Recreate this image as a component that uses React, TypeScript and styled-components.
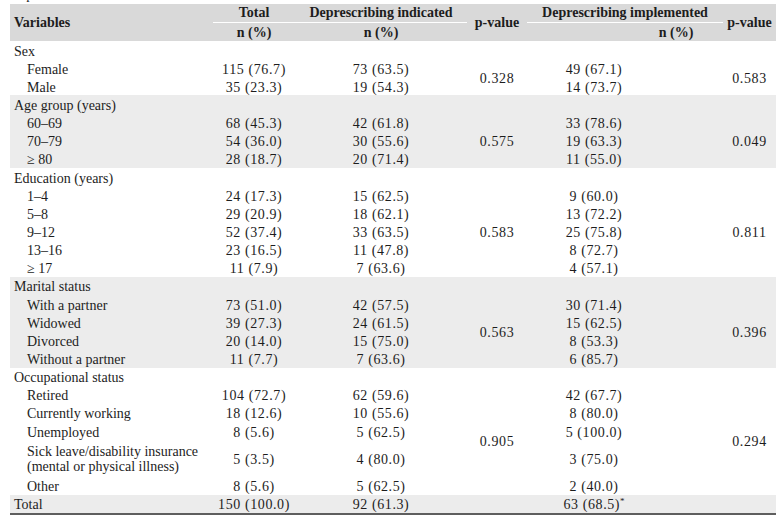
import React from 'react';
import styled, { createGlobalStyle } from 'styled-components';

const GlobalStyle = createGlobalStyle`
    html, body {
        margin: 0;
        padding: 0;
        background: #ffffff;
    }
    body {
        font-family: 'Liberation Serif', 'Times New Roman', serif;
        color: #1d1d1d;
    }
`;

const SERIF = `'Liberation Serif', 'Times New Roman', serif`;

interface Item {
    label: React.ReactNode;
    total: string;
    indicated: string;
    implemented: string;
    tall?: boolean;
}

interface Group {
    title: string;
    pIndicated: string;
    pImplemented: string;
    shaded: boolean;
    items: Item[];
}

const groups: Group[] = [
    {
        title: 'Sex',
        pIndicated: '0.328',
        pImplemented: '0.583',
        shaded: false,
        items: [
            { label: 'Female', total: '115 (76.7)', indicated: '73 (63.5)', implemented: '49 (67.1)' },
            { label: 'Male', total: '35 (23.3)', indicated: '19 (54.3)', implemented: '14 (73.7)' },
        ],
    },
    {
        title: 'Age group (years)',
        pIndicated: '0.575',
        pImplemented: '0.049',
        shaded: true,
        items: [
            { label: '60–69', total: '68 (45.3)', indicated: '42 (61.8)', implemented: '33 (78.6)' },
            { label: '70–79', total: '54 (36.0)', indicated: '30 (55.6)', implemented: '19 (63.3)' },
            { label: '≥ 80', total: '28 (18.7)', indicated: '20 (71.4)', implemented: '11 (55.0)' },
        ],
    },
    {
        title: 'Education (years)',
        pIndicated: '0.583',
        pImplemented: '0.811',
        shaded: false,
        items: [
            { label: '1–4', total: '24 (17.3)', indicated: '15 (62.5)', implemented: '9 (60.0)' },
            { label: '5–8', total: '29 (20.9)', indicated: '18 (62.1)', implemented: '13 (72.2)' },
            { label: '9–12', total: '52 (37.4)', indicated: '33 (63.5)', implemented: '25 (75.8)' },
            { label: '13–16', total: '23 (16.5)', indicated: '11 (47.8)', implemented: '8 (72.7)' },
            { label: '≥ 17', total: '11 (7.9)', indicated: '7 (63.6)', implemented: '4 (57.1)' },
        ],
    },
    {
        title: 'Marital status',
        pIndicated: '0.563',
        pImplemented: '0.396',
        shaded: true,
        items: [
            { label: 'With a partner', total: '73 (51.0)', indicated: '42 (57.5)', implemented: '30 (71.4)' },
            { label: 'Widowed', total: '39 (27.3)', indicated: '24 (61.5)', implemented: '15 (62.5)' },
            { label: 'Divorced', total: '20 (14.0)', indicated: '15 (75.0)', implemented: '8 (53.3)' },
            { label: 'Without a partner', total: '11 (7.7)', indicated: '7 (63.6)', implemented: '6 (85.7)' },
        ],
    },
    {
        title: 'Occupational status',
        pIndicated: '0.905',
        pImplemented: '0.294',
        shaded: false,
        items: [
            { label: 'Retired', total: '104 (72.7)', indicated: '62 (59.6)', implemented: '42 (67.7)' },
            { label: 'Currently working', total: '18 (12.6)', indicated: '10 (55.6)', implemented: '8 (80.0)' },
            { label: 'Unemployed', total: '8 (5.6)', indicated: '5 (62.5)', implemented: '5 (100.0)' },
            {
                label: (
                    <>
                        Sick leave/disability insurance
                        <br />
                        (mental or physical illness)
                    </>
                ),
                total: '5 (3.5)',
                indicated: '4 (80.0)',
                implemented: '3 (75.0)',
                tall: true,
            },
            { label: 'Other', total: '8 (5.6)', indicated: '5 (62.5)', implemented: '2 (40.0)' },
        ],
    },
];

const LINE = 18.15;

export default function App() {
    return (
        <>
            <GlobalStyle />
            <Page>
                <Caption>
                    <CaptionText>Deprescribed medications</CaptionText>
                </Caption>
                <Table>
                    <colgroup>
                        <Col $w={203} />
                        <Col $w={82} />
                        <Col $w={172} />
                        <Col $w={60} />
                        <Col $w={196} />
                        <Col $w={53} />
                    </colgroup>
                    <thead>
                        <tr>
                            <HeadCell rowSpan={2} $align='left'>
                                Variables
                            </HeadCell>
                            <GroupHead>Total</GroupHead>
                            <GroupHead>Deprescribing indicated</GroupHead>
                            <HeadCell rowSpan={2}>p-value</HeadCell>
                            <GroupHead>Deprescribing implemented</GroupHead>
                            <HeadCell rowSpan={2}>p-value</HeadCell>
                        </tr>
                        <tr>
                            <SubHead>n (%)</SubHead>
                            <SubHead>n (%)</SubHead>
                            <SubHead $shift={102}>n (%)</SubHead>
                        </tr>
                    </thead>
                    {groups.map((group) => (
                        <Section key={group.title} $shaded={group.shaded}>
                            <tr>
                                <Label $level={0}>{group.title}</Label>
                                <Value />
                                <Value />
                                <Value />
                                <Value />
                                <Value />
                            </tr>
                            {group.items.map((item, i) => (
                                <tr key={i}>
                                    <Label $level={1} $tall={item.tall}>
                                        {item.label}
                                    </Label>
                                    <Value>{item.total}</Value>
                                    <Value>{item.indicated}</Value>
                                    {i === 0 && <Value rowSpan={group.items.length}>{group.pIndicated}</Value>}
                                    <Value $right={62}>{item.implemented}</Value>
                                    {i === 0 && <Value rowSpan={group.items.length}>{group.pImplemented}</Value>}
                                </tr>
                            ))}
                        </Section>
                    ))}
                    <Section $shaded>
                        <tr>
                            <Label $level={0} $last>
                                Total
                            </Label>
                            <Value $last>150 (100.0)</Value>
                            <Value $last>92 (61.3)</Value>
                            <Value $last />
                            <Value $last $right={62}>
                                63 (68.5)<Star>*</Star>
                            </Value>
                            <Value $last />
                        </tr>
                    </Section>
                </Table>
            </Page>
        </>
    );
}

const Page = styled.div`
    padding: 0 6px 0 10px;
    width: 766px;
    font-family: ${SERIF};
`;

const Caption = styled.div`
    height: 4px;
    overflow: hidden;
    font-family: ${SERIF};
    font-size: 14px;
    line-height: 14px;
`;

const CaptionText = styled.div`
    margin-top: -12px;
`;

const Table = styled.table`
    width: 766px;
    border-collapse: collapse;
    border-spacing: 0;
    table-layout: fixed;
    font-family: ${SERIF};
    font-size: 14px;
    color: #1d1d1d;
`;

const Col = styled.col<{ $w: number }>`
    width: ${({ $w }) => $w}px;
`;

const HeadCell = styled.th<{ $align?: 'left' | 'center' }>`
    background: #d9d9d9;
    font-family: ${SERIF};
    font-weight: bold;
    text-align: ${({ $align }) => $align ?? 'center'};
    padding: 1px 0 0 ${({ $align }) => ($align === 'left' ? '4px' : '0')};
    vertical-align: middle;
    line-height: 16px;
`;

const GroupHead = styled.th`
    background: #d9d9d9;
    font-family: ${SERIF};
    font-weight: bold;
    text-align: center;
    padding: 0;
    height: 18px;
    line-height: 16px;
    vertical-align: middle;
    border-bottom: 1px solid #ffffff;
`;

const SubHead = styled.th<{ $shift?: number }>`
    background: #d9d9d9;
    font-family: ${SERIF};
    font-weight: bold;
    text-align: center;
    padding: 1px 0 0 ${({ $shift }) => $shift ?? 0}px;
    height: 17px;
    line-height: 16px;
    vertical-align: middle;
`;

const Section = styled.tbody<{ $shaded?: boolean }>`
    background: ${({ $shaded }) => ($shaded ? '#ececec' : '#ffffff')};
`;

const Label = styled.td<{ $level: number; $tall?: boolean; $last?: boolean }>`
    font-family: ${SERIF};
    padding: 2px 0 0 ${({ $level }) => ($level === 0 ? 4 : 17)}px;
    height: ${({ $tall }) => ($tall ? LINE * 2 - 2 : LINE - 2)}px;
    line-height: 15px;
    vertical-align: middle;
    text-align: left;
    white-space: nowrap;
    border-bottom: ${({ $last }) => ($last ? '2px solid #5e5e5e' : 'none')};
`;

const Value = styled.td<{ $right?: number; $last?: boolean }>`
    font-family: ${SERIF};
    padding: 2px ${({ $right }) => $right ?? 0}px 0 0;
    line-height: 15px;
    letter-spacing: 0.6px;
    vertical-align: middle;
    text-align: center;
    white-space: nowrap;
    border-bottom: ${({ $last }) => ($last ? '2px solid #5e5e5e' : 'none')};
`;

const Star = styled.sup`
    font-size: 9px;
    line-height: 0;
    vertical-align: 5px;
    letter-spacing: 0;
`;
